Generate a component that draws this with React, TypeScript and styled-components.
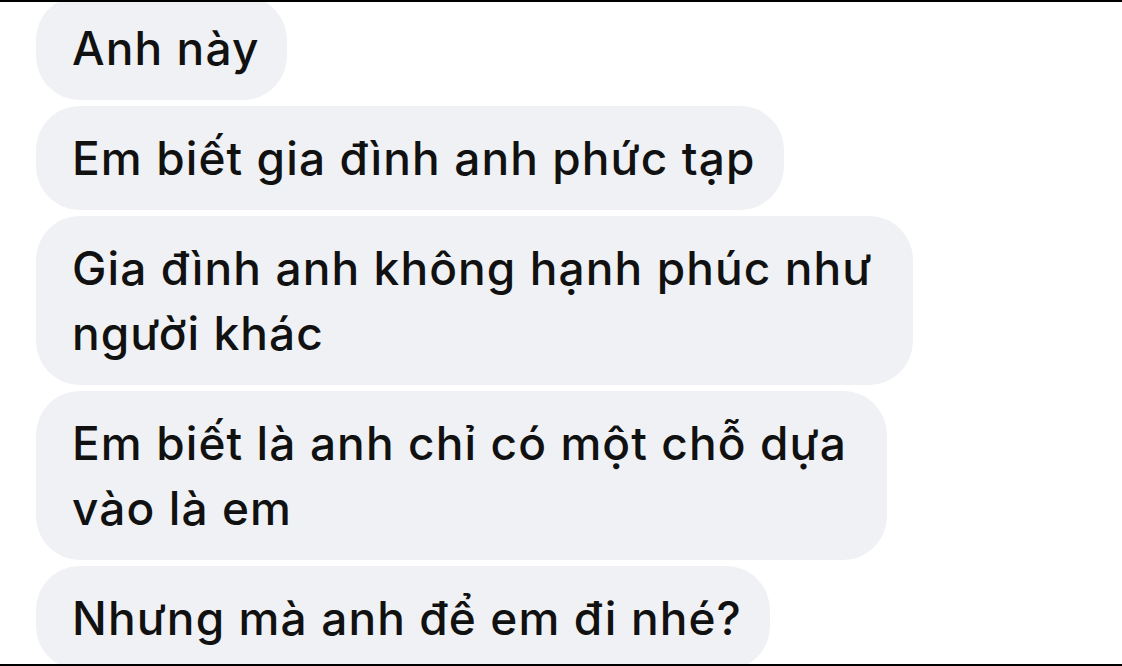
import React from "react";
import styled, { createGlobalStyle } from "styled-components";

const GlobalStyle = createGlobalStyle`
	html, body {
		margin: 0;
		padding: 0;
		background: #fff;
	}
	body {
		font-family: Inter, "Noto Sans", "Liberation Sans", sans-serif;
	}
`;

const Screen = styled.div`
	width: 1122px;
	height: 666px;
	box-sizing: border-box;
	border-top: 2px solid #000;
	border-bottom: 2px solid #000;
	background: #fff;
	overflow: hidden;
`;

const Thread = styled.div`
	display: flex;
	flex-direction: column;
	align-items: flex-start;
	gap: 6px;
	margin-top: -6px;
	padding-left: 36px;
`;

const Bubble = styled.div<{ $wrapped?: boolean }>`
	box-sizing: border-box;
	padding: 20px ${(p) => (p.$wrapped ? "40px" : "28px")} 19px 36px;
	background: #eff1f4;
	border-radius: 44px;
	color: #111;
	font-size: 46px;
	font-weight: 520;
	line-height: 65px;
	letter-spacing: 1.1px;
`;

const Line = styled.div`
	white-space: nowrap;
`;

const messages: string[][] = [
	["Anh này"],
	["Em biết gia đình anh phức tạp"],
	["Gia đình anh không hạnh phúc như", "người khác"],
	["Em biết là anh chỉ có một chỗ dựa", "vào là em"],
	["Nhưng mà anh để em đi nhé?"],
];

export default function App() {
	return (
		<Screen>
			<GlobalStyle />
			<Thread>
				{messages.map((lines, i) => (
					<Bubble key={i} $wrapped={lines.length > 1}>
						{lines.map((l, j) => (
							<Line key={j}>{l}</Line>
						))}
					</Bubble>
				))}
			</Thread>
		</Screen>
	);
}
